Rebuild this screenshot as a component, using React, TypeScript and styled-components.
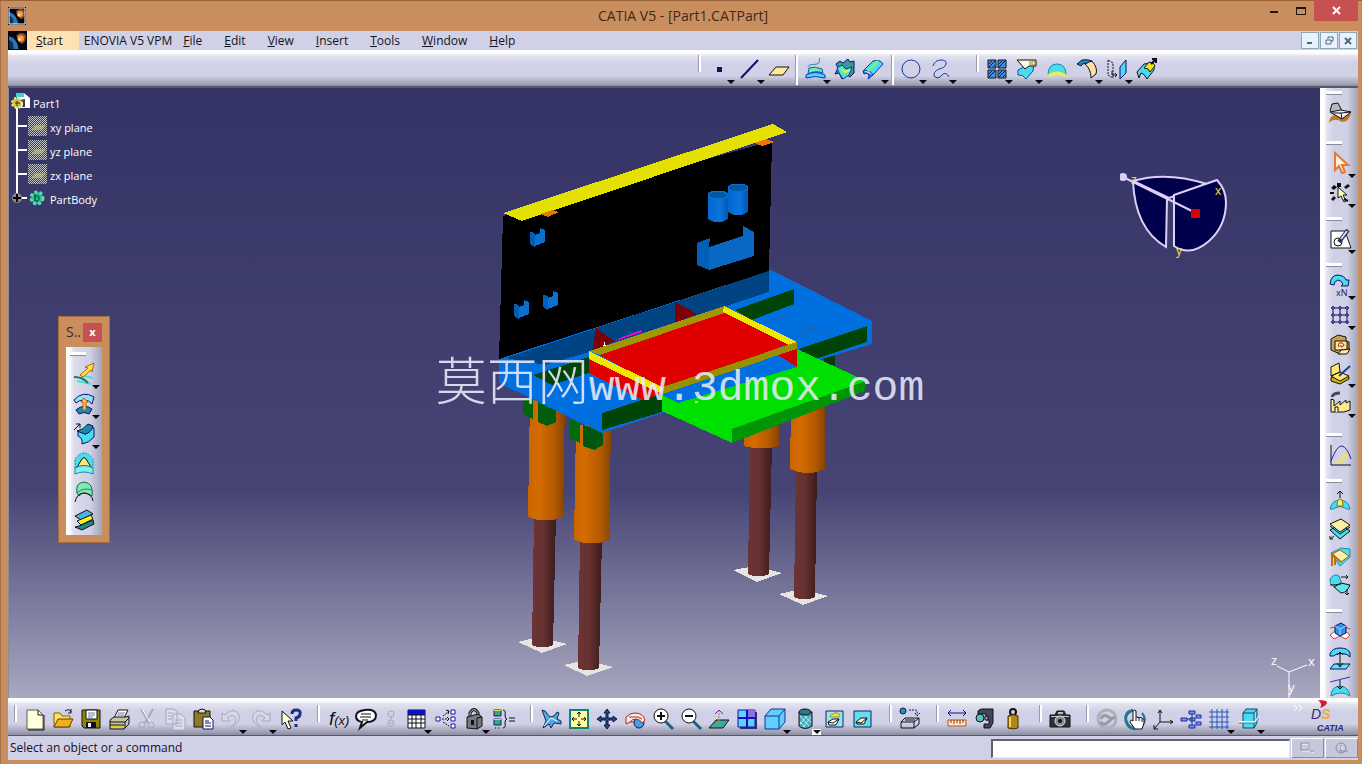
import React from "react";
import styled, { createGlobalStyle, css } from "styled-components";

const GlobalStyle = createGlobalStyle`
  * { box-sizing: border-box; }
  html, body, #root { height: 100%; margin: 0; }
  body {
    font-family: "Open Sans", "Noto Sans CJK SC", sans-serif;
    font-size: 12px;
    line-height: 16px;
    color: #14141e;
    overflow: hidden;
  }
  button { font: inherit; color: inherit; padding: 0; border: 0; background: none; }
`;

const K = "#101018";
const N = "#10106a";
const C = "#48dcf0";
const T = "#2088a8";
const Y = "#ffe870";
const G = "#a8a8b8";

const icons: Record<string, React.ReactNode> = {
  point: <path d="M12 12h5v5h-5z" fill={N} />,
  line: <path d="M6 23 23 5" stroke={N} strokeWidth="2" fill="none" />,
  plane: <path d="M4 20h14l6-8H11z" fill="#ffe898" stroke={K} />,
  sweep: (
    <>
      <path d="M19 3c-2 4 1 4-3 6-5 1-8 0-9 3" fill="none" stroke={T} />
      <path d="M8 13q6-2 13 1l1 4q-8-3-15 1z" fill="#70f0a0" stroke="#1050d0" />
      <path d="M5 20q9-5 19 0v3q-10-3-19 0z" fill={C} stroke="#1030c0" />
    </>
  ),
  fill: (
    <>
      <path d="m5 9 4-3 3 2 5-4 2 3 4-1v12l-4 4-3-2-5 4-3-6-4 1 3-6z" fill="#389898" stroke={N} />
      <path d="m6 13 5-3 4 4 6-2-3 8-6 4-4-6z" fill="#50e8c0" stroke="#1030c0" />
      <path d="m10 14 4 3 5-2" fill="none" stroke="#e0f050" strokeWidth="2" />
    </>
  ),
  pipe: (
    <>
      <path d="m4 16 10-10q7-2 10 3L14 20q-3-6-10-4z" fill={C} stroke="#1030a0" />
      <path d="m9 16 10-10" stroke="#70f090" strokeWidth="3" />
      <path d="m4 16 1 3q4-2 5 2l-1 3 5-4" stroke="#1030c0" fill="#2878e0" />
    </>
  ),
  circle: <circle cx="14" cy="14" r="9" fill="none" stroke="#1838a0" />,
  spline: <path d="M6 11Q8 5 14 5q6 0 5 4-1 4-7 5-6 3-5 7 4 4 8-1 4-4 7 2" fill="none" stroke="#1838a0" />,
  tiles: (
    <>
      <path d="M5 5h8v8H5zM15 5h8v8h-8zM5 15h8v8H5zM15 15h8v8h-8z" fill="#4090e0" stroke={K} />
      <path d="m6 9 3-3M6 12l6-6M10 12l2-2M16 9l3-3M16 12l6-6M6 19l3-3M6 22l6-6M16 19l3-3M16 22l6-6M20 22l2-2" stroke={N} />
    </>
  ),
  tag: (
    <>
      <path d="m5 15 6-3q5 0 10-5l-1 9-7 8q-3-5-8-4z" fill={C} stroke="#1848b0" />
      <path d="M4 5h19v6h-7l-4 3z" fill="#f8f8e8" stroke={K} />
      <path d="M17 6v4M19 6h3v4h-3z" fill="none" stroke="#a08010" />
    </>
  ),
  dome: (
    <>
      <path d="M5 20q0-11 9-11t9 11q-9-5-18 0z" fill={C} stroke={T} />
      <path d="M5 21q9-6 18 0" fill="none" stroke="#e8f050" strokeWidth="3" />
    </>
  ),
  fillet: (
    <>
      <path d="m4 9 5-4q6-1 10 1l-3 3q-6-2-8 2z" fill={T} stroke={N} />
      <path d="M12 9q4-2 7-3 6 7 4 13l-5 4q0-9-6-14z" fill="#ffe0a0" stroke={K} />
    </>
  ),
  mirror: (
    <>
      <path d="M5 5v15l5 3V8z" fill="none" stroke={K} strokeDasharray="2 1" />
      <path d="M9 16v4h5M12 18l2 2-2 2" fill="none" stroke={K} />
      <path d="M17 12l6-7v13l-6 6z" fill={C} stroke={N} />
    </>
  ),
  extract: (
    <>
      <path d="m4 17 7-8q6-2 10 1v5l-7 9q-3-6-6-6l-2 5z" fill={C} stroke={K} />
      <path d="m11 13 5-6q5 0 6 4l-5 6q-1-4-6-4z" fill="#f0e020" stroke={K} />
      <path d="m18 9 5-5m-4 0h4v4" fill="none" stroke={K} strokeWidth="2" />
    </>
  ),
  workbench: (
    <>
      <path d="M3 24q1-9 8-8 6 4 12-4l2 2q-2 9-9 9-8-5-13 1z" fill="#c07828" />
      <path d="m6 5 6-1 4 8-10 2-2-2z" fill="#b8b8b8" stroke={K} />
      <path d="m4 13 11-2 10 2-9 7z" fill="#f4f4f4" stroke={K} />
      <path d="m6 14 9 0 1 6M15 14l10-1" stroke={K} fill="none" />
    </>
  ),
  select: <path d="M9 4v17l4-4 3 7 3-1-3-7h6z" fill="#fff4e0" stroke="#e87830" strokeWidth="2" />,
  filter: (
    <>
      <path d="m5 9 3-3 3 2-3 3zM11 4h4v4h-4zM18 8l4-3 2 2-4 3zM5 20l3-3 2 2-3 3z" fill={K} />
      <path d="M12 8v11l3-2 3 6 2-1-3-6h4z" fill="#ffffc0" stroke={K} />
      <path d="m18 20 4 2M4 14h4" stroke={K} strokeWidth="2" />
    </>
  ),
  sketch: (
    <>
      <path d="M5 6h14l6 17H5z" fill="#fff" stroke={K} />
      <circle cx="12" cy="17" r="4" fill="none" stroke={K} />
      <path d="m13 17 9-12" stroke="#203060" strokeWidth="4" />
      <path d="m15 14 6-8" stroke="#d0e0e8" strokeWidth="2" />
    </>
  ),
  repeat: (
    <>
      <path d="M4 13Q5 4 12 4q7 1 8 5h3l-1 6h-7l2-2q-2-4-5-4-4 1-4 5z" fill={C} stroke={N} />
      <text x="10" y="25" fontSize="9" fill={N}>xN</text>
    </>
  ),
  pattern: (
    <g stroke={N} fill="none">
      <path d="M7 5v18M14 5v18M21 5v18M5 7h18M5 14h18M5 21h18" />
      <path d="M6 6h2v2H6zM13 6h2v2h-2zM20 6h2v2h-2zM6 13h2v2H6zM13 13h2v2h-2zM20 13h2v2h-2zM6 20h2v2H6zM13 20h2v2h-2zM20 20h2v2h-2z" fill="#fff" />
    </g>
  ),
  catalog: (
    <>
      <path d="m5 8 7-4 8 2v4l3 1v8l-9 4-9-4z" fill="#c8a050" stroke={K} />
      <path d="M9 10h12v9H9z" fill="#ffe8a0" stroke={K} />
      <path d="M13 16q-2-5 3-4 4 2 0 4-2 0-1-2" fill="none" stroke="#a02010" />
      <path d="m12 23 3-4 9-1-3 5z" fill="#f8e8a0" stroke={K} />
    </>
  ),
  note: (
    <>
      <path d="m5 19 9-4 9 3v2l-9 5-9-3z" fill="#d0b000" stroke={K} />
      <path d="m5 8 8-4 1 9-9 4zM5 17l9-4 9 4-9 5z" fill={Y} stroke={K} />
      <path d="m24 7-11 10" stroke="#1840a0" strokeWidth="2" />
    </>
  ),
  factory: (
    <>
      <path d="M6 8q1-4 8-4" fill="none" stroke="#484858" strokeWidth="3" />
      <path d="M5 23V10l3 1v6l6-5v4l6-5v3l4-2v9l-6 2z" fill="#ffe890" stroke={K} />
      <path d="M9 23v-5h3v5" fill="#fff8d0" stroke={K} />
    </>
  ),
  graph: (
    <>
      <path d="m8 22 14-12v7l-9 6z" fill="#e8e080" />
      <path d="M5 4v20h20" fill="none" stroke={K} />
      <path d="M5 20Q11 4 16 5q5 1 9 13" fill="none" stroke="#2020b0" />
    </>
  ),
  split: (
    <>
      <path d="M4 22q2-9 10-9t10 9q-2 1-5-1-5-3-10 0-3 2-5 1z" fill={C} stroke={T} />
      <path d="M11 19q0-7 3-7t3 7z" fill={Y} stroke="#907000" />
      <path d="M14 11V4m-3 3 3-3 3 3" fill="none" stroke={K} />
    </>
  ),
  thick: (
    <>
      <path d="m4 15 11-6 9 7-10 8z" fill={C} stroke={K} />
      <path d="m4 9 11-5 9 6-10 7z" fill="#fff0a0" stroke={K} />
      <path d="M4 11l10 8 10-7M4 24l4-3m-4 0v3h3" fill="none" stroke={K} />
    </>
  ),
  close: (
    <>
      <path d="M5 10 15 5l9 1v8l-10 9z" fill={C} stroke={T} />
      <path d="m6 11 8-4 9 6-8 6z" fill="#fff0b0" stroke="#a06010" />
      <path d="M6 11v12M9 13v9M6 11l9 8" stroke="#c07010" fill="none" strokeWidth="2" />
    </>
  ),
  sew: (
    <>
      <path d="M4 8q4-6 9-3l3 8-8 3q-5-3-4-8z" fill={C} stroke={T} />
      <path d="m8 16 7-4 9 2q-3 8-9 8z" fill="#60e8e8" stroke={K} />
      <path d="M4 14q6 0 11-1M15 6h7m-2-2 2 2-2 2M21 18v6m-2-2 2 2 2-2" fill="none" stroke={K} />
    </>
  ),
  axisbox: (
    <>
      <path d="m4 18 5-4 5 3 5-3 5 4-4 4-6-3-6 3zM4 11l5-1M19 10l5 2" fill="#fff" stroke="#d04040" />
      <path d="m9 9 6-3 5 3v7l-6 3-5-3z" fill="#3090e8" stroke={N} />
      <path d="m9 9 5 3 6-3M14 12v6" fill="none" stroke="#a0e0ff" />
    </>
  ),
  offset: (
    <>
      <path d="M4 9q2-6 10-6t10 5v4q-3-3-5-3-4-1-8 0-4 3-7 2z" fill={C} stroke={N} />
      <path d="m4 24 4-5h16l-4 5z" fill="#60e8f0" stroke={N} />
      <path d="M14 7v15m-3-12 3-3 3 3m-6 8 3 4 3-4" fill="none" stroke={K} />
    </>
  ),
  project: (
    <>
      <path d="M4 9 24 4" stroke="#3030c0" />
      <path d="M5 23q0-9 9-10 9 1 10 10-4-3-9-3t-10 3z" fill={C} stroke={T} />
      <path d="M14 7v9m-3-3 3 3 3-3" fill="none" stroke={K} />
    </>
  ),
  extrude: (
    <>
      <path d="M10 15l13 3M7 21l14 3" fill="none" stroke={C} strokeWidth="2" />
      <path d="M4 17q9 0 14 6" fill="none" stroke="#108040" strokeWidth="2" />
      <path d="m10 15 8-7-3-1 9-4-2 9-1-2-8 7z" fill="#ffe040" stroke="#c06010" />
    </>
  ),
  surfaceUp: (
    <>
      <path d="M4 10q9-10 20-3l-2 7q-3-4-8-4t-8 3z" fill="#90e0f8" stroke={N} />
      <path d="M6 20q8-7 16-1l-3 5q-5-3-10 0z" fill={T} stroke={N} />
      <path d="m14 8-3 4h2v8h3v-8h2z" fill="#ffc060" stroke="#c06000" />
    </>
  ),
  bend: (
    <>
      <path d="m8 11 7 3q6-1 6-8l3 2v9q-5 6-12 7 1-6-4-8z" fill={C} stroke={N} />
      <path d="M7 11q6-1 11-7l5 2q-2 7-8 8z" fill={T} stroke={N} />
      <path d="m4 10 6-6m-4 0h4v4" fill="none" stroke={K} />
    </>
  ),
  revolve: (
    <>
      <path d="M5 18V9q9-12 18 0v9q-9-5-18 0z" fill={C} stroke={T} strokeDasharray="2 1" />
      <path d="m7 17 5-8q2-3 4 0l5 8q-7-3-14 0z" fill={Y} stroke={K} />
      <path d="M5 18q9-5 18 0v6q-9-4-18 0z" fill="#80f0f0" stroke={T} />
    </>
  ),
  sphere: (
    <>
      <path d="M7 15Q5 5 14 4q10 1 8 14-8-6-13 0z" fill="#80e8b0" stroke="#206050" />
      <path d="M7 15q6-6 15-3" fill="none" stroke="#208080" />
      <path d="M5 24q2-9 9-9 8 1 9 8" fill="none" stroke={K} />
    </>
  ),
  layers: (
    <>
      <path d="m5 10 12-6 6 4-12 6z" fill="#50b0e8" stroke={K} />
      <path d="m9 20 14-6 1 4-12 6-7-3z" fill="#208880" stroke={K} />
      <path d="m7 15 14-6 2 4-12 6z" fill="#f8f020" stroke={K} />
    </>
  ),
  newfile: (
    <>
      <path d="M6 5h11l5 5v14H6z" fill="#ffffdc" stroke="#606050" />
      <path d="M17 5v5h5M23 10v15H7" fill="none" stroke={K} />
    </>
  ),
  open: (
    <>
      <path d="M5 22V8h6l2 3h8v11z" fill="#ffe060" stroke="#806000" />
      <path d="m5 22 4-8h15l-4 8z" fill="#f0b020" stroke="#604000" />
      <path d="M16 6q4-3 6 1m0-3v4h-3" fill="none" stroke={K} />
    </>
  ),
  save: (
    <>
      <path d="M5 5h18v18H7l-2-2z" fill="#908800" stroke={K} />
      <path d="M9 5h11v9H9z" fill="#fff" stroke={K} />
      <path d="M11 8h7M11 10h7M11 12h5" stroke="#7080a0" />
      <path d="M9 17h10v6H9z" fill={K} />
      <path d="M11 18h3v4h-3z" fill="#fff" />
    </>
  ),
  print: (
    <>
      <path d="m9 13 4-8h10l-4 8z" fill="#fff" stroke={K} />
      <path d="m13 8h7M12 10h7" stroke="#7080a0" />
      <path d="m5 15 4-3h12l3-1v8l-5 5H5z" fill="#c8c4a0" stroke={K} />
      <path d="M5 17h15l4-4M5 20h14M20 17v6" fill="none" stroke={K} />
      <path d="M7 21h9v2H7z" fill="#e0d020" />
    </>
  ),
  cut: (
    <g stroke={G} fill="none">
      <path d="m8 4 8 14M20 4l-8 14" strokeWidth="2" />
      <circle cx="9" cy="20" r="3" /><circle cx="18" cy="20" r="3" />
      <path d="m9 4 8 13" stroke="#fff" />
    </g>
  ),
  copy: (
    <g fill="#dcdcec" stroke={G}>
      <path d="M5 4h8l3 3v12H5zM12 9h8l4 4v12H12z" />
      <path d="M7 8h5M7 11h4M7 14h4M14 15h7M14 18h7M14 21h7" />
    </g>
  ),
  paste: (
    <>
      <path d="M5 6h16v16H5z" fill="#8c7c20" stroke={K} />
      <path d="M9 8q0-4 4-4t4 4z" fill="#e0e0c0" stroke={K} />
      <path d="M14 12h7l3 3v9H14z" fill="#fff" stroke={N} />
      <path d="M16 16h4M16 18h6M16 21h6" stroke={N} />
    </>
  ),
  undo: <path d="M5 8v8h8l-3-3q5-5 8-1 3 5-4 10 10-4 8-12-5-9-14 0z" fill="#d8d8e8" stroke={G} />,
  redo: <path d="M23 8v8h-8l3-3q-5-5-8-1-3 5 4 10-10-4-8-12 5-9 14 0z" fill="#d8d8e8" stroke={G} />,
  help: (
    <>
      <path d="M5 6v14l3-3 3 7 3-1-3-7h5z" fill="#ffffe0" stroke={K} />
      <path d="M15 9q0-4 4-4 5 0 4 4 0 3-4 4v3m0 3v3" fill="none" stroke="#203080" strokeWidth="3" />
    </>
  ),
  formula: (
    <text x="5" y="20" fontFamily="Liberation Sans, sans-serif" fontStyle="italic" fontSize="19" fill={K}>
      f<tspan fontSize="13">(x)</tspan>
    </text>
  ),
  comment: (
    <>
      <path d="M13 5q10-1 11 5 0 7-9 7l-7 6 2-6q-6-1-6-6t9-6z" fill="#fff" stroke={K} strokeWidth="2" />
      <path d="M9 9h10M8 12h11M10 15h6" stroke={K} />
    </>
  ),
  chain: (
    <g stroke={G} fill="none">
      <circle cx="14" cy="9" r="3" /><circle cx="14" cy="18" r="3" /><path d="M14 12v3M12 18h4" />
    </g>
  ),
  table: (
    <>
      <path d="M6 5h17v18H6z" fill="#fff" stroke={K} />
      <path d="M6 5h17v5H6z" fill="#1010c0" />
      <path d="M6 10h17M6 14h17M6 18h17M10 10v13M14 10v13M19 10v13" stroke={K} />
    </>
  ),
  relations: (
    <>
      <path d="M4 12h4v4H4zM19 5h4v4h-4zM19 12h4v4h-4zM19 19h4v4h-4z" fill="#fff" stroke="#1818a0" />
      <path d="M10 14h7M11 11l6-5M11 17l6 4" stroke={K} strokeDasharray="2 1" />
      <path d="m14 5 3 1-1 3M15 12l2 2-2 2" fill="none" stroke={K} />
    </>
  ),
  lock: (
    <>
      <path d="M10 12V8q4-7 8 0v4" fill="none" stroke={K} strokeWidth="3" />
      <path d="M10 12V8q4-7 8 0v3" fill="none" stroke="#c0c0c8" />
      <path d="m7 12 11-3 4 3v9l-5 3-10-1z" fill="#787880" stroke={K} />
      <path d="m17 13 5-1M17 13v11" stroke={K} />
      <path d="M11 15h3v5h-3z" fill={K} />
    </>
  ),
  equals: (
    <>
      <path d="M4 5h7v6H4zM4 14h7v6H4z" fill="#30a890" stroke="#202060" />
      <path d="M4 5h7v1H4zM4 14h7v1H4z" fill="#e0e040" />
      <path d="M13 5q3 0 2 5 0 4 2 4-2 0-2 4 1 5-2 5M19 13h6M19 16h6M5 23h1M8 23h1" fill="none" stroke={K} />
    </>
  ),
  fly: (
    <>
      <path d="m5 5 3 1 5 6 4-1 3-4 2 1-2 6 4 2v3l-7-1-3 5-2-4-6 4 3-7z" fill="#50a8e0" stroke="#102858" />
      <path d="m7 21 7-8 6 3" stroke="#fff" fill="none" />
    </>
  ),
  fit: (
    <>
      <path d="M5 5h18v18H5z" fill="#ffffa0" stroke="#108080" strokeWidth="2" />
      <path d="M14 7v5M14 16v5M7 14h5M16 14h5M12 9l2-2 2 2M12 19l2 2 2-2M9 12l-2 2 2 2M19 12l2 2-2 2" fill="none" stroke={K} />
    </>
  ),
  pan: <path d="m14 4-3 4h2v5H8v-2l-4 3 4 3v-2h5v5h-2l3 4 3-4h-2v-5h5v2l4-3-4-3v2h-5V8h2z" fill="#204878" stroke="#101850" />,
  rotate: (
    <>
      <circle cx="18" cy="18" r="5" fill="#40a0e8" stroke={N} />
      <path d="M5 12q4-4 9-4 8 0 10 7l-3 3q-2-4-6-4-4 0-6 3l-4 2z" fill="#ffe8e0" stroke="#a03020" />
      <path d="M8 12h9l4 2M9 17h5" fill="none" stroke="#a03020" />
    </>
  ),
  zoomIn: (
    <>
      <path d="m16 16 8 8" stroke="#206080" strokeWidth="3" />
      <circle cx="12" cy="11" r="7" fill="#fff" stroke={K} />
      <path d="M12 7v8M8 11h8" stroke={K} strokeWidth="2" />
    </>
  ),
  zoomOut: (
    <>
      <path d="m16 16 8 8" stroke="#206080" strokeWidth="3" />
      <circle cx="12" cy="11" r="7" fill="#fff" stroke={K} />
      <path d="M8 11h8" stroke={K} strokeWidth="2" />
    </>
  ),
  normal: (
    <>
      <path d="m4 23 7-8h13l-6 8z" fill="#40a8a0" stroke={K} />
      <path d="M14 19V6" stroke="#d08020" strokeDasharray="2 1" />
      <path d="m10 9 4-4 4 4" fill="none" stroke="#8020a0" />
    </>
  ),
  multi: (
    <>
      <path d="M7 7h17v17H7z" fill="#303070" />
      <path d="M5 5h17v17H5z" fill="#60d0ff" stroke="#1010c0" />
      <path d="M14 5h8v8h-8z" fill="#9070e0" />
      <path d="M14 5v17M5 13h17" stroke="#1010c0" strokeWidth="2" />
    </>
  ),
  iso: <path d="M4 11h14v13H4zM4 11l6-7h14v13l-6 7M18 11l6-7" fill="#60d0f8" stroke="#1030a0" />,
  shading: (
    <>
      <path d="M8 7v14q6 5 13 0V7z" fill="#48a8c0" stroke={K} />
      <path d="m9 11 9 10M9 17l5 5M13 10l7 8M20 12l-8 10M16 11l-7 8" stroke="#b8f0f0" />
      <ellipse cx="14" cy="7" rx="6" ry="3" fill="#307888" stroke={K} />
    </>
  ),
  hide: (
    <>
      <path d="M5 6h17v16H5z" fill="#90e8f0" stroke="#202060" />
      <path d="M9 12q0-3 3-3 3-3 6 0 2 1 0 3z" fill="#f0d860" stroke="#b09020" />
      <path d="m7 17 5-3h6l-3 6H8z" fill="#fff" stroke={K} />
      <path d="m7 17 5 1 6-4" fill="none" stroke={K} />
    </>
  ),
  swap: (
    <>
      <path d="M5 6h17v16H5z" fill="#60e0f0" stroke="#202060" />
      <path d="m7 17 5-4h6l-3 6H8z" fill="#fff8c0" stroke={K} />
      <path d="m7 17 5 1 6-5" fill="none" stroke={K} />
    </>
  ),
  dimension: (
    <>
      <circle cx="7" cy="6" r="3" fill="#3090a8" stroke={N} />
      <path d="M13 5h6q3 0 2 5m-2-2 2 3 3-3" fill="none" stroke={N} strokeDasharray="2 1" />
      <path d="M5 17h13v6H5zM5 17l4-4h14l-5 4M23 13v6l-5 4M9 15h10" fill="none" stroke={K} />
    </>
  ),
  measure: (
    <>
      <path d="M5 8h18M8 5 5 8l3 3M20 5l3 3-3 3" fill="none" stroke="#101080" />
      <path d="M5 15h18v6H5z" fill="#ffe8c0" stroke="#b05020" />
      <path d="M8 15v3M11 15v4M14 15v3M17 15v4M20 15v3" stroke="#903010" />
    </>
  ),
  caliper: (
    <>
      <path d="M7 6q2-2 4-2h11v14l-3 5h-6v-4h5v-4h-3V9H7z" fill="#404858" stroke={K} />
      <circle cx="9" cy="13" r="4" fill="#50c0c0" stroke={K} />
      <path d="M14 11h3v4h-3z" fill="#a0a0a8" stroke={K} />
    </>
  ),
  weight: (
    <>
      <circle cx="14" cy="7" r="3" fill="none" stroke={K} strokeWidth="2" />
      <path d="M9 11q5-3 10 0v12q-5 2-10 0z" fill="#b08818" stroke="#403000" />
      <path d="M11 12v10" stroke="#f0d060" strokeWidth="2" />
    </>
  ),
  camera: (
    <>
      <path d="M4 10h5l2-4h7l2 4h4v12H4z" fill="#303038" stroke={K} />
      <path d="M12 7h5v2h-5zM5 11h18v1H5z" fill="#c0c0c8" />
      <circle cx="14" cy="16" r="5" fill="#888" stroke="#e0e0e0" />
      <circle cx="14" cy="16" r="2" fill={K} />
    </>
  ),
  update: (
    <g fill="none" strokeWidth="3">
      <circle cx="14" cy="14" r="9" stroke="#b0b0b8" />
      <path d="M8 14q2-5 6-3 4 4 8 1M7 17q4 4 7 1 3-2 4-4" stroke="#9898a0" />
    </g>
  ),
  hand: (
    <>
      <path d="M12 5Q3 8 5 16q2 7 9 8" fill="none" stroke="#207890" strokeWidth="3" />
      <path d="M21 8q5 6 1 12" fill="none" stroke="#207890" strokeWidth="2" />
      <path d="M12 6q2-2 3 0v6l6 1q3 1 2 5l-2 6h-7l-5-7q0-3 3-1z" fill="#fff" stroke={K} />
      <path d="M15 12v4M18 13v3M21 14v3" stroke={K} />
    </>
  ),
  axis: <path d="M11 5v12h13M11 17l-6 7M9 8l2-3 2 3M21 15l3 2-3 2M5 20v4h4" fill="none" stroke={K} />,
  tree: (
    <>
      <path d="M12 6h6v3h-6zM4 13h6v3H4zM13 13h5v3h-5zM19 10h5v3h-5zM19 17h5v3h-5zM12 20h6v3h-6z" fill="#60a0f0" stroke="#2028a0" />
      <path d="M10 14h3M15 9v11" stroke="#2028a0" />
    </>
  ),
  grid: (
    <path d="M7 4v20M12 4v20M17 4v20M22 4v20M4 7h20M4 12h20M4 17h20M4 22h20" stroke="#2058c0" />
  ),
  section: (
    <>
      <path d="M8 8h11v15H8zM8 8l3-4h11l-3 4M22 4v14l-3 5" fill={C} stroke="#104070" />
      <path d="M4 17h16l4-5" fill="none" stroke="#fff" strokeWidth="2" />
      <path d="M4 18h16l4-5" fill="none" stroke="#208090" />
    </>
  ),
};

type IconDef = { id: string; label: string; arrow?: boolean; slot?: number; lit?: boolean };
const i = (id: string, label: string, arrow = false, slot?: number, lit = false): IconDef => ({ id, label, arrow, slot, lit });

/* ---------- window frame ---------- */

const Window = styled.div`
  display: flex;
  flex-direction: column;
  height: 100vh;
  background: #c98e5d;
  padding: 0 4px 4px 8px;
  box-shadow: inset 0 1px #9a6438, inset 1px 0 #a8724a;
`;

const TitleBar = styled.header`
  display: grid;
  grid-template-columns: 1fr auto 1fr;
  align-items: center;
  height: 31px;
  flex: none;
`;

const Title = styled.h1`
  margin: 0;
  font-size: 14px;
  font-weight: 400;
  line-height: 30px;
  color: #3c2a1c;
`;

const WindowControls = styled.div`
  display: flex;
  justify-content: flex-end;
  align-self: start;
`;

const WindowButton = styled.button<{ $close?: boolean }>`
  width: ${(p) => (p.$close ? 44 : 27)}px;
  height: 21px;
  display: grid;
  place-items: center;
  background: ${(p) => (p.$close ? "#c75050" : "transparent")};
`;

const MenuBar = styled.nav`
  display: flex;
  align-items: stretch;
  height: 19px;
  flex: none;
  background: #d0d0e6;
`;

const MenuButton = styled.button<{ $active?: boolean; $tight?: boolean }>`
  padding: 0 ${(p) => (p.$tight ? 0 : 11)}px 0 11px;
  ${(p) =>
    p.$active &&
    css`
      background: #ffe2b4;
      padding: 0 16px 0 9px;
      margin-right: -6px;
    `}
  &::first-letter { text-decoration: ${(p) => (p.$tight ? "none" : "underline")}; }
`;

const Mdi = styled.div`
  display: flex;
  gap: 1px;
  margin-left: auto;
  padding: 1px 1px 0 0;
`;

const MdiButton = styled.button`
  width: 18px;
  height: 17px;
  display: grid;
  place-items: center;
  background: #e8f2fa;
  border: 1px solid #8fa8b8;
`;

/* ---------- toolbars ---------- */

const barSurface = css`
  background: linear-gradient(#fff 0, #fff 3px, #e2e2f0 6px, #d0d0e6 14px, #d0d0e6 26px, #a0a0b4 34px, #8c8ca0 100%);
`;

const TopBar = styled.div`
  ${barSurface}
  display: flex;
  justify-content: flex-end;
  align-items: flex-start;
  height: 38px;
  flex: none;
  padding: 5px 197px 0 0;
  border-bottom: 2px solid #58586c;
`;

const BottomBar = styled.div`
  ${barSurface}
  display: flex;
  align-items: flex-start;
  gap: 12px;
  height: 38px;
  flex: none;
  padding: 7px 0 0 6px;
  border-bottom: 1px solid #58586c;
`;

const Tools = styled.div<{ $vertical?: boolean; $space?: number }>`
  display: flex;
  flex: none;
  flex-direction: ${(p) => (p.$vertical ? "column" : "row")};
  ${(p) => (p.$vertical ? `margin-top: ${p.$space ?? 0}px;` : `margin-left: ${p.$space ?? 0}px;`)}
`;

const Grip = styled.span<{ $vertical?: boolean; $long?: boolean }>`
  flex: none;
  ${(p) =>
    p.$vertical
      ? css`
          height: 8px;
          &::before { content: ""; display: block; width: 16px; height: 3px; background: #fff; border-bottom: 1px solid #8c8ca0; }
        `
      : css`
          width: ${p.$long ? 8 : 7}px;
          &::before {
            content: "";
            display: block;
            width: 2px;
            height: ${p.$long ? 30 : 17}px;
            margin-left: ${p.$long ? 2 : 0}px;
            background: #fff;
            border-left: 1px solid #9c9cb0;
          }
        `}
`;

const ToolButton = styled.button<{ $w: number; $h: number }>`
  display: flex;
  justify-content: center;
  width: ${(p) => p.$w}px;
  height: ${(p) => p.$h}px;
  flex: none;
  svg { flex: none; overflow: visible; }
`;

function Tool({ def, vertical }: { def: IconDef; vertical?: boolean }) {
  const size = def.arrow ? 30 : 28;
  const width = vertical ? 28 : size;
  return (
    <ToolButton type="button" aria-label={def.label} $w={def.slot ?? width} $h={vertical ? size : 30}>
      <svg width={width} height={size} viewBox={`0 0 ${width} ${size}`} aria-hidden="true">
        {icons[def.id]}
        {def.lit && <path d="M21 24h9v6h-9z" fill="#fff" />}
        {def.arrow && <path d="M22 25h8l-4 4z" fill="#08080c" />}
      </svg>
    </ToolButton>
  );
}

function ToolGroup({ items, vertical, space, grip = "short" }: { items: IconDef[]; vertical?: boolean; space?: number; grip?: "short" | "long" }) {
  return (
    <Tools $vertical={vertical} $space={space} role="toolbar">
      <Grip $vertical={vertical} $long={grip === "long"} />
      {items.map((d) => (
        <Tool key={d.id} def={d} vertical={vertical} />
      ))}
    </Tools>
  );
}

const topGroups: { items: IconDef[]; grip: "short" | "long"; space: number }[] = [
  { items: [i("point", "Point", true), i("line", "Line", true), i("plane", "Plane")], grip: "short", space: 0 },
  { items: [i("sweep", "Sweep", true), i("fill", "Fill"), i("pipe", "Blend", true)], grip: "long", space: 0 },
  { items: [i("circle", "Circle", true), i("spline", "Spline", true)], grip: "long", space: 0 },
  {
    items: [
      i("tiles", "Join", true), i("tag", "Split", true), i("dome", "Boundary", true),
      i("fillet", "Fillet", true), i("mirror", "Symmetry", true), i("extract", "Extrapolate"),
    ],
    grip: "short",
    space: 19,
  },
];

const bottomGroups: IconDef[][] = [
  [
    i("newfile", "New"), i("open", "Open"), i("save", "Save"), i("print", "Print"), i("cut", "Cut"), i("copy", "Copy"),
    i("paste", "Paste"), i("undo", "Undo", true), i("redo", "Redo", true), i("help", "What's This?"),
  ],
  [
    i("formula", "Formula"), i("comment", "Comment"), i("chain", "Link", false, 22), i("table", "Design Table", true),
    i("relations", "Relations"), i("lock", "Lock", true), i("equals", "Equivalent Dimensions"),
  ],
  [
    i("fly", "Fly"), i("fit", "Fit All In"), i("pan", "Pan"), i("rotate", "Rotate"), i("zoomIn", "Zoom In"),
    i("zoomOut", "Zoom Out"), i("normal", "Normal View"), i("multi", "Multi View"), i("iso", "Isometric View", true),
    i("shading", "Shading", true, undefined, true), i("hide", "Hide/Show"), i("swap", "Swap Visible Space"),
  ],
  [i("dimension", "Dimension")],
  [i("measure", "Measure Between"), i("caliper", "Measure Item"), i("weight", "Measure Inertia")],
  [i("camera", "Capture")],
  [
    i("update", "Update All"), i("hand", "Manual Update"), i("axis", "Axis System"), i("tree", "Tree"),
    i("grid", "Work on Support", true), i("section", "Section", true),
  ],
];

const sideGroups: { items: IconDef[]; space: number }[] = [
  { items: [i("workbench", "Workbench")], space: 0 },
  { items: [i("select", "Select", true), i("filter", "Selection Filter", true)], space: 14 },
  { items: [i("sketch", "Sketch", true)], space: 8 },
  {
    items: [i("repeat", "Object Repetition", true), i("pattern", "Pattern", true), i("catalog", "Catalog"), i("note", "Annotation", true), i("factory", "Manufacturing", true)],
    space: 8,
  },
  { items: [i("graph", "Law")], space: 14 },
  { items: [i("split", "Split Body"), i("thick", "Thick Surface"), i("close", "Close Surface"), i("sew", "Sew Surface")], space: 10 },
  { items: [i("axisbox", "Part Axis"), i("offset", "Offset"), i("project", "Projection")], space: 10 },
];

const surfaceTools: IconDef[] = [
  i("extrude", "Extrude", true), i("surfaceUp", "Offset Surface", true), i("bend", "Sweep Surface", true),
  i("revolve", "Revolve"), i("sphere", "Loft"), i("layers", "Multi-sections"),
];

const SideBar = styled.aside`
  width: 38px;
  flex: none;
  padding: 3px 0 0 6px;
  overflow: hidden;
  background: linear-gradient(90deg, #fff 0, #fff 4px, #e2e2f0 7px, #d0d0e6 14px, #d0d0e6 27px, #a4a4b8 100%);
`;

/* ---------- work area ---------- */

const Work = styled.main`
  display: flex;
  flex: 1;
  min-height: 0;
`;

const Viewport = styled.section`
  position: relative;
  flex: 1;
  min-width: 0;
  background: linear-gradient(#343365 0, #3e3d6e 35%, #464474 66%, #a9a8c0 100%);
  border-left: 1px solid #8c8ca0;
`;

const Scene = styled.svg`
  position: absolute;
  inset: 0;
  width: 100%;
  height: 100%;
`;

const Corner = styled.svg<{ $bottom?: boolean }>`
  position: absolute;
  right: ${(p) => (p.$bottom ? 0 : 90)}px;
  ${(p) => (p.$bottom ? "bottom: 0;" : "top: 80px;")}
`;

const Watermark = styled.p`
  position: absolute;
  left: 0;
  right: 0;
  top: 258px;
  margin: 0;
  padding-left: 31px;
  text-align: center;
  font-family: "Liberation Mono", monospace;
  font-size: 43px;
  line-height: 64px;
  white-space: nowrap;
  color: rgba(232, 232, 248, 0.9);
  pointer-events: none;
  span {
    font-family: "Noto Sans CJK SC", sans-serif;
    font-size: 51px;
    font-weight: 300;
  }
`;

const Tree = styled.ul`
  position: relative;
  width: max-content;
  margin: 0;
  padding: 4px 0 0 1px;
  list-style: none;
  color: #fff;
  font-size: 11px;
`;

const TreeRow = styled.li`
  display: flex;
  align-items: center;
  gap: 3px;
  height: 24px;
`;

const Palette = styled.aside`
  position: absolute;
  left: 49px;
  top: 228px;
  width: 52px;
  padding: 5px 7px 7px;
  background: #c98e5d;
  border: 1px solid #a46c40;
`;

const PaletteHead = styled.div`
  display: flex;
  justify-content: space-between;
  align-items: center;
  height: 20px;
  margin-bottom: 5px;
  font-size: 14px;
  color: #3c2a1c;
`;

const PaletteClose = styled.button`
  width: 19px;
  height: 19px;
  background: #c75050;
  color: #fff;
  font-size: 11px;
  font-weight: 700;
  line-height: 16px;
`;

const PaletteBody = styled.div`
  padding: 5px 0 1px 4px;
  background: linear-gradient(90deg, #fff 0, #fff 3px, #dcdcec 8px, #d0d0e6 24px, #a4a4b8 100%);
`;

/* ---------- status ---------- */

const BrandCell = styled.div`
  display: flex;
  align-items: flex-start;
  margin: -7px 4px 0 auto;
`;

const StatusBar = styled.footer`
  display: flex;
  align-items: center;
  height: 24px;
  flex: none;
  padding-left: 2px;
  background: #d0d0e6;
`;

const StatusText = styled.label`
  flex: 1;
`;

const CommandInput = styled.input`
  width: 299px;
  height: 19px;
  padding: 0 4px;
  font: inherit;
  background: #fff;
  border: 1px solid #e8e8f4;
  border-top: 2px solid #606074;
  border-left: 2px solid #606074;
  border-radius: 0;
`;

const StatusButton = styled.button`
  width: 33px;
  height: 20px;
  margin-left: 1px;
  display: grid;
  place-items: center;
  background: #c8c8dc;
  border: 1px solid #8c8ca0;
  border-top-color: #fff;
  border-left-color: #fff;
`;

/* ---------- drawings ---------- */

function Star({ size, framed }: { size: number; framed?: boolean }) {
  return (
    <svg width={size} height={size} viewBox="0 0 18 18" aria-hidden="true">
      <path d="M0 0h18v18H0z" fill="#060610" />
      <path d="M1 5q8 2 9 12H5Q5 9 1 9z" fill="#2878b8" />
      <path d="M1 9q5 1 4 8H1z" fill="#103058" />
      <path d="M8 4q5-4 9 0 0 7-4 8-4-2-5-8z" fill="#a04818" />
      <circle cx="12" cy="7" r="3" fill="#f0a050" />
      <circle cx="11" cy="8" r="1" fill="#fff4d0" />
      {framed && <path d="M1 1h16v16H1z" fill="none" stroke="#fff" />}
    </svg>
  );
}

const P = ({ d, f }: { d: string; f: string }) => <path d={d} fill={f} />;

function Cup({ x, y }: { x: number; y: number }) {
  return (
    <g transform={`translate(${x} ${y})`}>
      <path d="M0 3v25q10 7 20 0V3z" fill="url(#cup)" />
      <ellipse cx="10" cy="4" rx="10" ry="4" fill="#0058a8" stroke="#0c70d0" />
    </g>
  );
}

function Bracket({ x, y }: { x: number; y: number }) {
  return (
    <g transform={`translate(${x} ${y})`}>
      <P d="M0 5 5 6v14l-5-3z" f="#0060b8" />
      <P d="M5 8 10 6V1l5 2v12L5 19z" f="#0c70d0" />
    </g>
  );
}

function Model() {
  return (
    <Scene viewBox="9 88 1311 610" aria-hidden="true" shapeRendering="crispEdges">
      <defs>
        <linearGradient id="sleeve">
          <stop offset="0" stopColor="#c86400" /><stop offset="0.3" stopColor="#d46c00" /><stop offset="0.7" stopColor="#b45a00" /><stop offset="1" stopColor="#884400" />
        </linearGradient>
        <linearGradient id="rod">
          <stop offset="0" stopColor="#6c3434" /><stop offset="0.45" stopColor="#683232" /><stop offset="1" stopColor="#3c1c1c" />
        </linearGradient>
        <linearGradient id="cup">
          <stop offset="0" stopColor="#0068d0" /><stop offset="0.6" stopColor="#0c74dc" /><stop offset="1" stopColor="#0058b0" />
        </linearGradient>
      </defs>
      <g fill="#e8e4e4">
        <path d="m518 642 20-5 29 7-25 9z" /><path d="m564 665 22-5 27 7-26 9z" />
        <path d="m733 570 22-4 27 7-25 9z" /><path d="m779 594 22-5 27 7-25 9z" />
      </g>
      <g fill="url(#rod)">
        <path d="M534 515h22l-3 130q-10 5-21 0z" /><path d="M580 538h22l-3 130q-10 5-21 0z" />
        <path d="M750 444h22l-3 130q-10 5-21 0z" /><path d="M796 468h21l-2 129q-10 5-21 0z" />
      </g>
      <g fill="url(#sleeve)">
        <path d="M530 398h35l-2 119q-17 7-35 0z" /><path d="M576 425h35l-2 115q-17 7-35 0z" />
        <path d="M744 420h35v26q-17 5-35 0z" /><path d="M791 405h34v64q-17 8-35 0z" />
      </g>
      <P d="M523 398h10v21l-10-5z" f="#006410" />
      <P d="M538 398h18v24l-9 4-9-4z" f="#005c10" />
      <P d="M569 419l11 4v20l-11-5z" f="#006c10" />
      <P d="M583 425l20 6v14l-9 5-11-4z" f="#005810" />
      <P d="M823 356h12v12l-10-3z" f="#003c08" />
      <P d="M769 269 872 321v23l-57 17-153 52-60 20-103-50v-24z" f="#0070e0" />
      <P d="M503 216 772 141 769 271 499 359z" f="#000" />
      <P d="M506 358 769 271v21l-180 60-44 13z" f="#004484" />
      <P d="M503 213 773 124l14 8-265 89z" f="#e4e000" />
      <P d="m541 214 11-4 7 2-11 5zM755 143l11-4 8 3-12 4z" f="#e87808" />
      <Cup x={708} y={191} />
      <Cup x={728} y={184} />
      <P d="M697 243l13-5-1 9v23l-12-5z" f="#0060b8" />
      <P d="M709 247l34-11V226l11 6v24l-45 14z" f="#0868c4" />
      <Bracket x={530} y={227} />
      <Bracket x={514} y={299} />
      <Bracket x={543} y={290} />
      <P d="M735 310 794 289v15l-42 16z" f="#004408" />
      <P d="M798 349 867 326v16l-52 17z" f="#004408" />
      <path d="m760 324 28-9M803 328l12 1 12 5M800 336l10-4" fill="none" stroke="#1c64a8" />
      <P d="M596 328 614 341 592 352zM675 302l22 12-22 9z" f="#7c0008" />
      <P d="M615 341 622 337 641 330 642 332 622 339z" f="#d010d0" />
      <P d="M533 375 589 357v16l-37 12z" f="#004408" />
      <P d="M602 413 662 393v19l-60 18z" f="#004408" />
      <P d="M589 359 662 394l-19 6-54-27z" f="#e00000" />
      <P d="M598 354 723 312l66 32-127 46z" f="#e00000" />
      <P d="M778 355l19-7v19z" f="#d00000" />
      <P d="M589 351 724 306v7L600 355z" f="#a09800" />
      <P d="M724 306 797 342l-8 3-66-33z" f="#f0e800" />
      <P d="M589 351 662 387v7l-73-35z" f="#f0e800" />
      <P d="M662 387 797 342v7l-135 45z" f="#989000" />
      <P d="M662 395l16 8 119-36v-18l69 32-134 48v14l-70-32z" f="#00e000" />
      <P d="M732 429 866 381l-1 10-133 52z" f="#009408" />
      <path d="M604 342v3m-1 0h3" stroke="#fff" />
      <path d="M695 402h3" stroke="#e0f040" strokeWidth="2" />
    </Scene>
  );
}

function Compass() {
  return (
    <Corner width="110" height="90" viewBox="1120 168 110 90" aria-hidden="true">
      <g fill="#00004c" stroke="#dcd0f8" strokeWidth="2">
        <path d="M1133 181q33-10 74 3l-38 14z" />
        <path d="M1133 181q2 48 33 66l1-49z" />
        <path d="M1174 195l43-15q9 10 9 22 0 24-17 39-18 16-35 5z" />
        <path d="m1123 177 73 36" />
      </g>
      <circle cx="1123" cy="177" r="4" fill="#dcd0f8" />
      <path d="M1191 209h9v9h-9z" fill="#dc0000" />
      <g fill="#f0e040" fontSize="12">
        <text x="1131" y="184">z</text><text x="1215" y="195">x</text><text x="1176" y="255">y</text>
      </g>
    </Corner>
  );
}

function Triad() {
  return (
    <Corner $bottom width="60" height="50" viewBox="1260 648 60 50" aria-hidden="true">
      <path d="m1277 666 12 6 18-7M1289 672v26" fill="none" stroke="#fff" />
      <g fill="#fff" fontSize="13">
        <text x="1271" y="665">z</text><text x="1308" y="666">x</text><text x="1288" y="692">y</text>
      </g>
    </Corner>
  );
}

function TreeIcon({ kind }: { kind: "root" | "plane" | "body" }) {
  if (kind === "root")
    return (
      <svg width="20" height="24" viewBox="0 0 20 24" aria-hidden="true">
        <path d="M6 1h8l6 5v10H9z" fill="#fff" /><path d="M6 1h8v4H6z" fill="#40d0e0" />
        <path d="M7 13v11" stroke="#fff" strokeWidth="2" />
        <circle cx="7" cy="11" r="5" fill="#d0c040" stroke="#f4f0a0" strokeDasharray="2 2" strokeWidth="2" />
        <path d="M10 8q5 2 2 7h3V7z" fill="#404048" /><path d="M5 11h5M7 9v5" stroke="#303020" />
      </svg>
    );
  return (
    <svg width="37" height="24" viewBox="0 0 37 24" aria-hidden="true">
      <defs>
        <pattern id="dither" width="2" height="2" patternUnits="userSpaceOnUse">
          <path d="M0 0h1v1H0zM1 1h1v1H1z" fill="#c4c4cc" />
        </pattern>
      </defs>
      {kind === "plane" ? (
        <>
          <path d="M7 0v24M7 10h10" fill="none" stroke="#fff" strokeWidth="2" />
          <path d="M18 0h19v20H18z" fill="url(#dither)" shapeRendering="crispEdges" />
          <path d="m21 14 4-5h11l-4 5z" fill="#c8c468" opacity="0.6" />
        </>
      ) : (
        <>
          <path d="M7 0v10h10" fill="none" stroke="#fff" strokeWidth="2" />
          <circle cx="7" cy="10" r="5" fill="#888890" /><path d="M7 6v8M3 10h8" stroke="#000" strokeWidth="2" />
          <circle cx="27" cy="10" r="6" fill="#30b890" stroke="#50e0b0" strokeWidth="3" strokeDasharray="3 2" />
          <path d="M25 6v7q4 1 4-3t-4-1" fill="none" stroke="#043828" />
        </>
      )}
    </svg>
  );
}

const menus = ["File", "Edit", "View", "Insert", "Tools", "Window", "Help"];

export default function App() {
  return (
    <>
      <GlobalStyle />
      <Window>
        <TitleBar>
          <Star size={18} framed />
          <Title>CATIA V5 - [Part1.CATPart]</Title>
          <WindowControls>
            <WindowButton aria-label="Minimize"><svg width="10" height="10"><path d="M1 5h8v2H1z" fill="#20140c" /></svg></WindowButton>
            <WindowButton aria-label="Maximize"><svg width="10" height="10"><path d="M0 1h10v8H0zM1 3v5h8V3z" fill="#20140c" fillRule="evenodd" /></svg></WindowButton>
            <WindowButton $close aria-label="Close"><svg width="9" height="9"><path d="m1 1 7 7M8 1 1 8" stroke="#fff" strokeWidth="2" /></svg></WindowButton>
          </WindowControls>
        </TitleBar>
        <MenuBar>
          <Star size={19} />
          <MenuButton $active>Start</MenuButton>
          <MenuButton $tight>ENOVIA V5 VPM</MenuButton>
          {menus.map((m) => <MenuButton key={m}>{m}</MenuButton>)}
          <Mdi>
            <MdiButton aria-label="Minimize document"><svg width="8" height="8"><path d="M1 5h5v2H1z" fill="#50687c" /></svg></MdiButton>
            <MdiButton aria-label="Restore document"><svg width="9" height="9"><path d="M3 3V1h5v4H6M1 4h5v4H1z" fill="none" stroke="#50687c" /></svg></MdiButton>
            <MdiButton aria-label="Close document"><svg width="8" height="8"><path d="m1 1 6 6M7 1 1 7" stroke="#50687c" strokeWidth="2" /></svg></MdiButton>
          </Mdi>
        </MenuBar>
        <TopBar>
          {topGroups.map((g) => <ToolGroup key={g.items[0].id} {...g} />)}
        </TopBar>
        <Work>
          <Viewport aria-label="Part view">
            <Model />
            <Tree>
              <TreeRow><TreeIcon kind="root" />Part1</TreeRow>
              {["xy plane", "yz plane", "zx plane"].map((p) => <TreeRow key={p}><TreeIcon kind="plane" />{p}</TreeRow>)}
              <TreeRow><TreeIcon kind="body" />PartBody</TreeRow>
            </Tree>
            <Compass />
            <Triad />
            <Palette aria-label="Surfaces">
              <PaletteHead>S..<PaletteClose aria-label="Close palette">x</PaletteClose></PaletteHead>
              <PaletteBody>
                <ToolGroup vertical items={surfaceTools} />
              </PaletteBody>
            </Palette>
            <Watermark><span>莫西网</span>www.3dmox.com</Watermark>
          </Viewport>
          <SideBar>
            {sideGroups.map((g) => <ToolGroup key={g.items[0].id} vertical items={g.items} space={g.space} />)}
          </SideBar>
        </Work>
        <BottomBar>
          {bottomGroups.map((items) => <ToolGroup key={items[0].id} items={items} />)}
          <BrandCell>
            <svg width="62" height="36" viewBox="1292 698 62 36" role="img" aria-label="CATIA">
              <path d="m1294 705 3 3-3 3m5-6 3 3-3 3" fill="none" stroke="#fff" />
              <path d="M1318 700q10 0 9 3-1 3-7 5 3-4-2-8z" fill="#d02030" />
              <text x="1311" y="719" fontFamily="Liberation Sans, sans-serif" fontStyle="italic" fontSize="14" fill="#302878">
                D<tspan fontWeight="bold" fill="#f0a838">S</tspan>
              </text>
              <text x="1317" y="731" fontFamily="Liberation Sans, sans-serif" fontStyle="italic" fontWeight="bold" fontSize="9" fill="#302878">CATIA</text>
            </svg>
          </BrandCell>
        </BottomBar>
        <StatusBar>
          <StatusText htmlFor="command">Select an object or a command</StatusText>
          <CommandInput id="command" type="text" />
          <StatusButton aria-label="Dialog"><svg width="17" height="13"><path d="M3 2h7v7H3M12 10h3" fill="none" stroke="#fff" /><path d="M2 1h8v7H2zM11 9h4" fill="none" stroke="#8c8ca0" /></svg></StatusButton>
          <StatusButton aria-label="Information"><svg width="17" height="13"><circle cx="8" cy="6" r="5" fill="none" stroke="#8c8ca0" /><path d="M8 3v6M6 9h9" stroke="#8c8ca0" /><path d="M9 4v4" stroke="#fff" /></svg></StatusButton>
        </StatusBar>
      </Window>
    </>
  );
}
